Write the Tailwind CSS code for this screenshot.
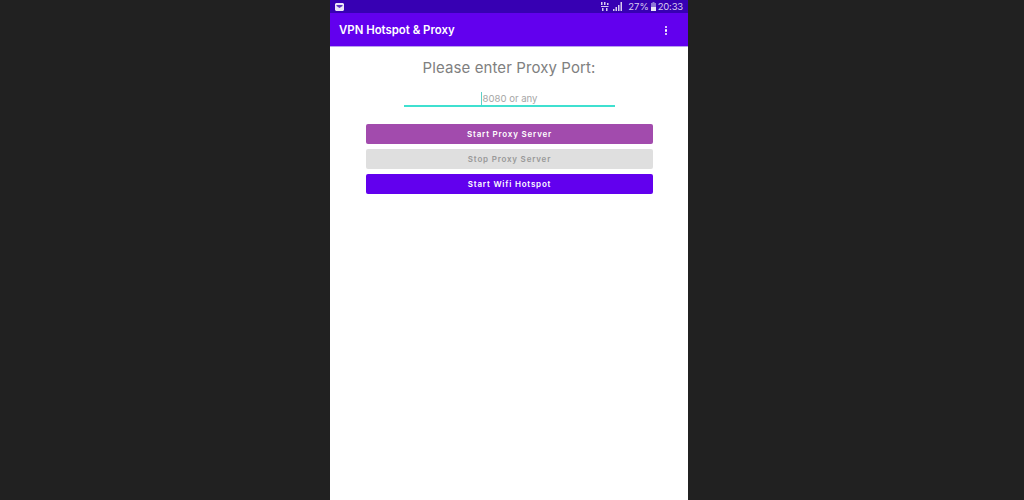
<!DOCTYPE html>
<html lang="en">
<head>
    <meta charset="UTF-8">
    <title>VPN Hotspot & Proxy</title>
    <script src="https://cdn.jsdelivr.net/npm/@tailwindcss/browser@4"></script>
</head>
<body class="bg-[#212121] font-['Inter',sans-serif] overflow-hidden">
    <div class="h-[500px] w-[358px] ml-[330px] bg-white flex flex-col">
        <!-- status bar -->
        <div class="h-[13px] bg-[#3700b3] flex items-center justify-between pl-[5px] pr-[5px] text-[#d9ccf0] text-[9.5px] leading-none">
            <svg class="w-[9px] h-[8px]" viewBox="0 0 9 8"><path fill="#ece6f7" d="M1 0h7l1 1v6l-1 1H1L0 7V1z"/><path fill="#5a2fc0" d="M1.500 2h6v1L4.500 5l-3-2z"/></svg>
            <div class="flex items-center">
                <svg class="w-[8px] h-[9px] mr-[4px]" viewBox="0 0 8 9" fill="#d9ccf0"><path d="M0 0h1.500v3H0zM3 0h1.500v3H3zM6 1h1.500v2H6zM0 4h7.500v1H0zM1 6h1.500v3H1zM5 6h1.500v3H5z"/></svg>
                <svg class="w-[9px] h-[9px] mr-[6px]" viewBox="0 0 9 9" fill="#d9ccf0"><path d="M0 7h1.500v2H0zM2.500 5H4v4H2.500zM5 3h1.500v6H5zM7.500 0H9v9H7.500z"/></svg>
                <span class="pt-[1px]">27%</span>
                <svg class="w-[5px] h-[9px] ml-[2px] mr-[2px]" viewBox="0 0 5 9"><path fill="#8f78d6" d="M1.500 0h2v1H5v8H0V1h1.500z"/><path fill="#ece6f7" d="M0 5h5v4H0z"/></svg>
                <span class="pt-[1px] tracking-[-0.2px]">20:33</span>
            </div>
        </div>
        <!-- app bar -->
        <div class="h-[34px] pt-[2px] bg-[#6200ee] border-b border-[#b9a0ee] flex items-center justify-between pl-[9px] pr-[21px]">
            <span class="text-white text-[11.4px] font-semibold">VPN Hotspot &amp; Proxy</span>
            <div class="flex flex-col gap-[1px]">
                <span class="w-[2.500px] h-[2.500px] rounded-full bg-white"></span>
                <span class="w-[2.500px] h-[2.500px] rounded-full bg-white"></span>
                <span class="w-[2.500px] h-[2.500px] rounded-full bg-white"></span>
            </div>
        </div>
        <!-- content -->
        <div class="flex flex-col items-center">
            <p class="mt-[11px] h-[20px] leading-[20px] text-[15px] tracking-[0.1px] text-[#808080]">Please enter Proxy Port:</p>
            <div class="mt-[11px] w-[211px] h-[18px] pt-[3px] border-b-2 border-[#3fe0d0] flex justify-center ml-[1px] text-[9.6px] leading-[13px] text-[#a6a6a6]">
                <span class="border-l border-[#5fd0c8]">8080 or any</span>
            </div>
            <div class="mt-[17px] w-[287px] flex flex-col gap-[5px] text-[8px] font-semibold tracking-[0.8px] ml-[1px]">
                <button class="h-[20px] rounded-[2px] bg-[#a24bad] text-white">Start Proxy Server</button>
                <button class="h-[20px] rounded-[2px] bg-[#dfdfdf] text-[#999999]">Stop Proxy Server</button>
                <button class="h-[20px] rounded-[2px] bg-[#6200ee] text-white">Start Wifi Hotspot</button>
            </div>
        </div>
    </div>
</body>
</html>
